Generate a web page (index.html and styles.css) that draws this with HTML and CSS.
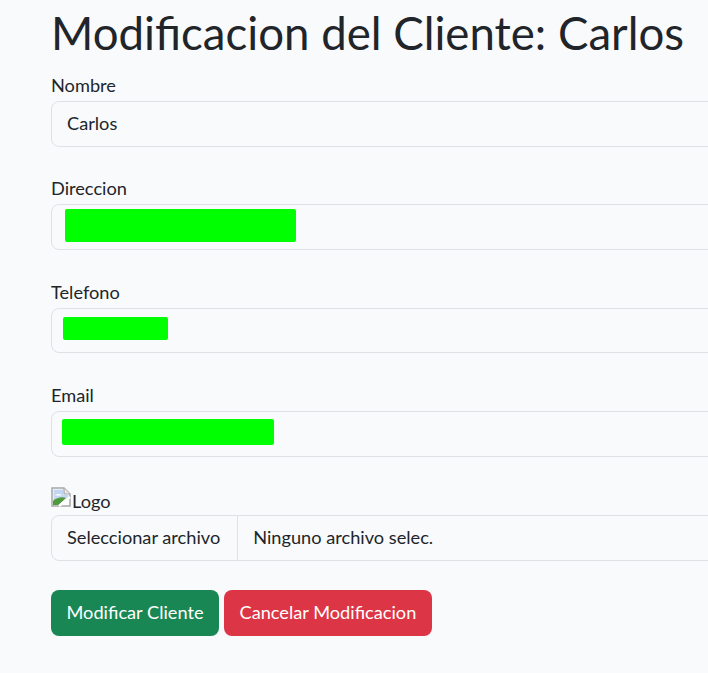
FILE: index.html
```html
<!DOCTYPE html>
<html lang="es">
<head>
    <meta charset="UTF-8">
    <meta name="viewport" content="width=device-width, initial-scale=1.0">
    <title>Modificacion del Cliente</title>
    <link rel="stylesheet" href="styles.css">
</head>
<body>
    <div class="container">
        <h1>Modificacion del Cliente: Carlos</h1>

        <form class="client-form">
            <div class="field">
                <label for="nombre">Nombre</label>
                <input id="nombre" class="form-control" type="text" value="Carlos">
            </div>

            <div class="field">
                <label for="direccion">Direccion</label>
                <div class="input-wrap">
                    <input id="direccion" class="form-control" type="text">
                    <span class="mask mask-direccion"></span>
                </div>
            </div>

            <div class="field">
                <label for="telefono">Telefono</label>
                <div class="input-wrap">
                    <input id="telefono" class="form-control" type="text">
                    <span class="mask mask-telefono"></span>
                </div>
            </div>

            <div class="field">
                <label for="email">Email</label>
                <div class="input-wrap">
                    <input id="email" class="form-control" type="text">
                    <span class="mask mask-email"></span>
                </div>
            </div>

            <!-- Imagen rota con su texto alternativo -->
            <div class="logo-field">
                <div class="logo-preview">
                    <svg class="broken-img" width="20" height="20" viewBox="0 0 20 20">
                        <path d="M1 1H13L19 7V19H1Z" fill="#fff" stroke="#a6a6a6" stroke-width="1.5"/>
                        <path d="M13 1V7H19" fill="#e8e8e8" stroke="#a6a6a6" stroke-width="1.2"/>
                        <path d="M2.5 2.5H12V8H17.5V11L2.5 15Z" fill="#c3d7f3"/>
                        <path d="M4 8.5C6 6.5 9 6.5 11 8.5Z" fill="#fff"/>
                        <path d="M2 18V14C6 10.5 11 9.5 15 11L8 18Z" fill="#4f9a3c"/>
                        <path d="M8 19L19 10" stroke="#fff" stroke-width="2.5"/>
                    </svg><span>Logo</span>
                </div>
                <div class="file-input">
                    <span class="file-button">Seleccionar archivo</span>
                    <span class="file-name">Ninguno archivo selec.</span>
                </div>
            </div>

            <div class="buttons">
                <button type="button" class="btn btn-success">Modificar Cliente</button>
                <button type="button" class="btn btn-danger">Cancelar Modificacion</button>
            </div>
        </form>
    </div>
</body>
</html>
```

FILE: styles.css
```css
html, body {
    height: 100%;
}

body {
    margin: 0;
    background-color: #f8fafc;
    color: #212529;
    font-family: "Lato", "Noto Sans", sans-serif;
    font-size: 18.2px;
    overflow: hidden;
}

.container {
    width: 760px;
    padding-left: 51px;
    box-sizing: content-box;
}

h1 {
    margin: 0;
    padding-top: 5px;
    height: 73px;
    box-sizing: border-box;
    font-size: 45.6px;
    font-weight: 400;
    line-height: 56px;
    white-space: nowrap;
}

.client-form {
    display: flex;
    flex-direction: column;
    gap: 29.8px;
}

.field label {
    display: block;
    height: 28px;
    line-height: 24px;
}

.input-wrap {
    position: relative;
}

.form-control {
    display: block;
    width: 100%;
    height: 45.6px;
    box-sizing: border-box;
    padding: 0 15px 2px;
    border: 1px solid #dee2e6;
    border-radius: 8px;
    background-color: #f8fafc;
    color: #212529;
    font: inherit;
}

/* Bloques verdes que tapan los datos */
.mask {
    position: absolute;
    background-color: #00ff00;
    border-radius: 2px;
}

.mask-direccion {
    left: 14px;
    top: 5px;
    width: 231px;
    height: 33px;
}

.mask-telefono {
    left: 12px;
    top: 9px;
    width: 105px;
    height: 23px;
}

.mask-email {
    left: 11px;
    top: 8px;
    width: 212px;
    height: 26px;
}

.logo-preview {
    height: 28px;
    line-height: 28px;
    display: flex;
    align-items: flex-start;
}

.broken-img {
    flex: none;
    margin-right: 1px;
}

.file-input {
    display: flex;
    height: 46px;
    box-sizing: border-box;
    border: 1px solid #dee2e6;
    border-radius: 8px;
    line-height: 43px;
    overflow: hidden;
}

.file-button {
    padding: 0 17px 0 15px;
    border-right: 1px solid #dee2e6;
    white-space: nowrap;
}

.file-name {
    padding: 0 15px;
    white-space: nowrap;
}

.buttons {
    display: flex;
    gap: 5px;
}

.btn {
    height: 46px;
    padding: 0 15.5px 2px;
    border: none;
    border-radius: 8px;
    color: #ffffff;
    font: inherit;
    cursor: pointer;
}

.btn-success {
    background-color: #198754;
}

.btn-danger {
    background-color: #dc3545;
}
```
